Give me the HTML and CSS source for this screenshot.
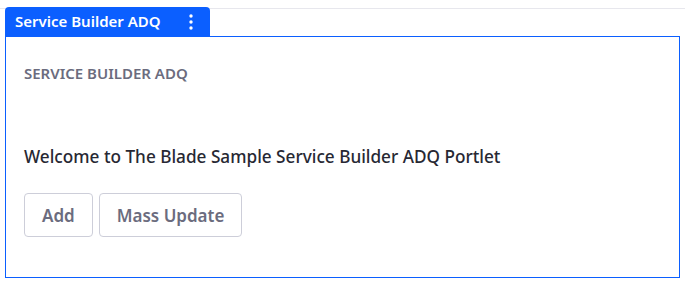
FILE: index.html
```html
<!DOCTYPE html>
<html>
<head>
<meta charset="utf-8">
<link rel="stylesheet" href="styles.css">
</head>
<body>
<div class="page">
  <div class="portlet">
    <div class="tab">
      <span class="tab-title">Service Builder ADQ</span>
      <span class="kebab" aria-label="Options">
        <svg width="4" height="16" viewBox="0 0 4 16"><circle cx="2" cy="2" r="1.7" fill="#fff"/><circle cx="2" cy="8" r="1.7" fill="#fff"/><circle cx="2" cy="14" r="1.7" fill="#fff"/></svg>
      </span>
    </div>
    <div class="box">
      <h2 class="heading">SERVICE BUILDER ADQ</h2>
      <p class="welcome">Welcome to The Blade Sample Service Builder ADQ Portlet</p>
      <div class="actions">
        <button class="btn">Add</button>
        <button class="btn">Mass Update</button>
      </div>
    </div>
  </div>
</div>
</body>
</html>
```
FILE: styles.css
```css
html, body {
  margin: 0;
  padding: 0;
  background: #fff;
}
body {
  font-family: "Noto Sans", "Open Sans", sans-serif;
  background: linear-gradient(#e7e7ed, #e7e7ed) 0 8px / 100% 1px no-repeat #fff;
  width: 685px;
  height: 284px;
}
.page {
  padding: 7px 5px 0 5px;
}
.portlet {
  width: 675px;
}
.tab {
  display: flex;
  align-items: center;
  justify-content: space-between;
  width: 205px;
  height: 29px;
  box-sizing: border-box;
  padding: 0 17px 0 10px;
  background: #0b5fff;
  border-radius: 4px 4px 0 0;
  color: #fff;
}
.tab-title {
  font-size: 15px;
  font-weight: 600;
  line-height: 1;
}
.kebab {
  display: flex;
}
.box {
  border: 1px solid #0b5fff;
  height: 242px;
  box-sizing: border-box;
  padding: 27px 18px 0 18px;
}
.heading {
  margin: 0;
  font-size: 15px;
  font-weight: 600;
  color: #6b6c7e;
  line-height: 18px;
}
.welcome {
  margin: 64px 0 0 0;
  font-size: 17.2px;
  font-weight: 500;
  color: #272833;
  line-height: 22px;
}
.actions {
  display: flex;
  gap: 6px;
  margin-top: 25px;
}
.btn {
  font-family: inherit;
  font-size: 17px;
  font-weight: 600;
  color: #6b6c7e;
  background: #fff;
  border: 1px solid #cdced9;
  border-radius: 4px;
  height: 44px;
  padding: 0 17px;
}
```
